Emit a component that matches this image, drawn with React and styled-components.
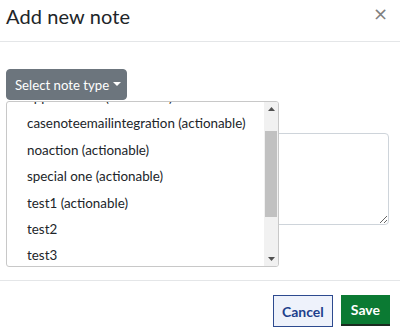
import React from "react";
import styled, { createGlobalStyle } from "styled-components";

const Global = createGlobalStyle`
  html, body { margin: 0; padding: 0; background: #fff; }
  body { font-family: Lato, "Noto Sans", sans-serif; color: #212529; }
`;

const Modal = styled.div`
  width: 400px;
  height: 331px;
  display: flex;
  flex-direction: column;
  background: #fff;
  overflow: hidden;
`;

const Header = styled.div`
  height: 42px;
  flex: none;
  display: flex;
  align-items: center;
  justify-content: space-between;
  padding: 0 12px 0 6px;
  border-bottom: 1px solid #e4e6e8;
  box-sizing: border-box;
`;

const Title = styled.h5`
  margin: 0;
  font-size: 20px;
  font-weight: 400;
  color: #212529;
  letter-spacing: 0.1px;
  padding-bottom: 10px;
`;

const Close = styled.button`
  border: 0;
  background: none;
  padding: 0;
  color: #808080;
  font-size: 18px;
  line-height: 1;
  font-family: "DejaVu Sans", sans-serif;
  padding-bottom: 14px;
`;

const Body = styled.div`
  flex: 1;
  padding: 27px 11px 0 6px;
  display: flex;
  flex-direction: column;
  align-items: flex-start;
`;

const DropdownWrap = styled.div`
  position: relative;
  z-index: 2;
`;

const Toggle = styled.button`
  display: flex;
  align-items: center;
  gap: 4px;
  height: 31px;
  width: 121px;
  padding: 0 0 0 8px;
  background: #6c757d;
  border: 1px solid #6c757d;
  border-radius: 4px;
  color: #fff;
  font-family: inherit;
  font-size: 13.2px;
`;

const Caret = styled.span`
  width: 0;
  height: 0;
  border-left: 4px solid transparent;
  border-right: 4px solid transparent;
  border-top: 4px solid #fff;
  margin-bottom: 2px;
`;

const Menu = styled.div`
  position: absolute;
  top: 32px;
  left: 0;
  width: 273px;
  height: 166px;
  box-sizing: border-box;
  border: 1px solid #c8c8c8;
  border-radius: 3px;
  background: #fff;
  display: flex;
  overflow: hidden;
`;

const ListViewport = styled.div`
  flex: 1;
  overflow: hidden;
`;

const List = styled.ul`
  list-style: none;
  margin: 0;
  padding: 0;
`;

const Item = styled.li`
  height: 26.4px;
  line-height: 26.4px;
  padding: 0 20px;
  font-size: 13.4px;
  color: #212529;
  white-space: nowrap;
`;

const Scrollbar = styled.div`
  width: 14px;
  flex: none;
  background: #f1f1f1;
  display: flex;
  flex-direction: column;
  align-items: center;
`;

const Arrow = styled.div`
  height: 14px;
  width: 14px;
  display: flex;
  align-items: center;
  justify-content: center;
`;

const Thumb = styled.div`
  width: 12px;
  background: #c1c1c1;
`;

const Track = styled.div`
  flex: 1;
  width: 100%;
  display: flex;
  justify-content: center;
`;

const Textarea = styled.textarea`
  margin-top: 33px;
  width: 383px;
  height: 92px;
  box-sizing: border-box;
  border: 1px solid #ced4da;
  border-radius: 4px;
  resize: vertical;
  font-family: inherit;
`;

const Footer = styled.div`
  height: 51px;
  flex: none;
  border-top: 1px solid #e4e6e8;
  display: flex;
  justify-content: flex-end;
  align-items: flex-start;
  gap: 8px;
  padding: 14px 10px 0 0;
  box-sizing: border-box;
`;

const Btn = styled.button`
  height: ${(p) => (p.$primary ? "31px" : "32px")};
  padding: 0 ${(p) => (p.$primary ? "10px" : "8px")};
  font-family: Lato, "Noto Sans", sans-serif;
  font-weight: 700;
  font-size: 14px;
  border-radius: 0;
  background: ${(p) => (p.$primary ? "#0b7a33" : "#eef2fb")};
  color: ${(p) => (p.$primary ? "#fff" : "#1d3f8c")};
  border: ${(p) => (p.$primary ? "0" : "1px solid #2d4a8f")};
  border-bottom: ${(p) => (p.$primary ? "2px solid #1b2a20" : "1px solid #2d4a8f")};
`;

const items = [
  "appointment (actionable)",
  "casenoteemailintegration (actionable)",
  "noaction (actionable)",
  "special one (actionable)",
  "test1 (actionable)",
  "test2",
  "test3",
  "test4",
];

export default function App() {
  return (
    <Modal>
      <Global />
      <Header>
        <Title>Add new note</Title>
        <Close aria-label="Close">×</Close>
      </Header>
      <Body>
        <DropdownWrap>
          <Toggle>
            Select note type <Caret />
          </Toggle>
          <Menu>
            <ListViewport>
              <List style={{ marginTop: -18 }}>
                {items.map((t) => (
                  <Item key={t}>{t}</Item>
                ))}
              </List>
            </ListViewport>
            <Scrollbar>
              <Arrow>
                <svg width="7" height="4" viewBox="0 0 7 4">
                  <path d="M0 4 L3.5 0 L7 4 Z" fill="#505050" />
                </svg>
              </Arrow>
              <Track>
                <Thumb style={{ marginTop: 15, height: 86 }} />
              </Track>
              <Arrow>
                <svg width="7" height="4" viewBox="0 0 7 4">
                  <path d="M0 0 L7 0 L3.5 4 Z" fill="#505050" />
                </svg>
              </Arrow>
            </Scrollbar>
          </Menu>
        </DropdownWrap>
        <Textarea />
      </Body>
      <Footer>
        <Btn>Cancel</Btn>
        <Btn $primary>Save</Btn>
      </Footer>
    </Modal>
  );
}
